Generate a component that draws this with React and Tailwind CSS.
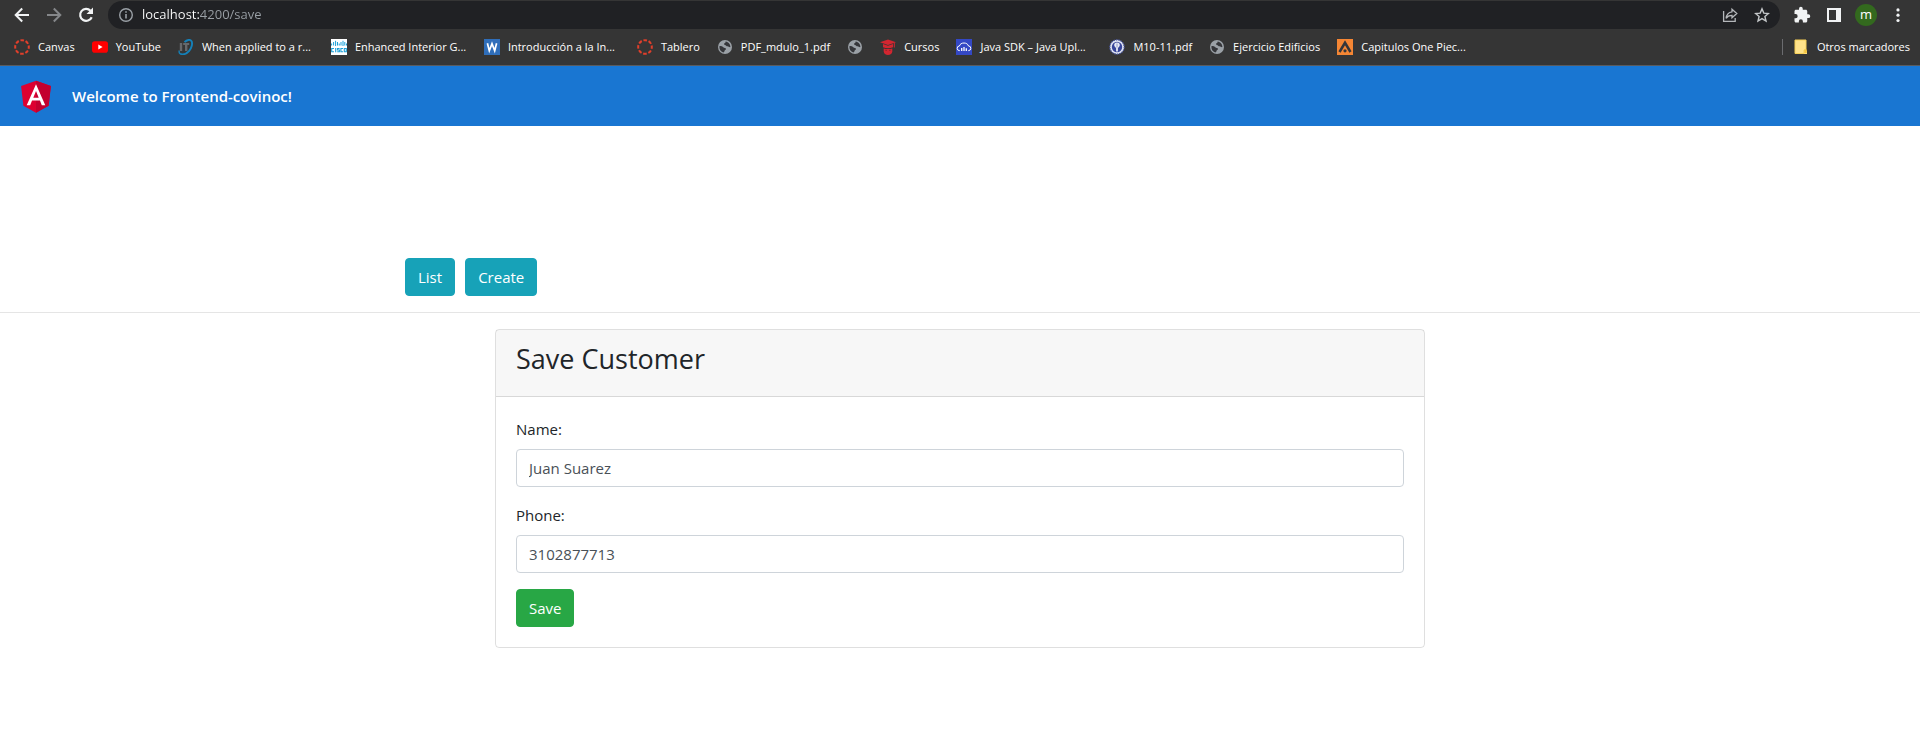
import { useState } from "react";

function CanvasIcon() {
  return (
    <svg viewBox="0 0 16 16" className="size-4" aria-hidden="true">
      <circle cx="8" cy="8" r="6.8" fill="none" stroke="#e13f2b" strokeWidth="2" strokeDasharray="3.6 1.74" strokeDashoffset="1.8" />
    </svg>
  );
}

function YouTubeIcon() {
  return (
    <svg viewBox="0 0 16 16" className="size-4" aria-hidden="true">
      <rect x="0" y="2.3" width="16" height="11.4" rx="2.8" fill="#f00" />
      <path d="M6.3 5.6v4.8L10.6 8z" fill="#fff" />
    </svg>
  );
}

function ItIcon() {
  return (
    <svg viewBox="0 0 16 16" className="size-4" aria-hidden="true">
      <path d="M6.5 3.2C9 .6 12 .2 13.400 2c1.500 2.200.3 7-2.400 10.200-2 2.300-4.600 3.600-8.200 3" fill="none" stroke="#1480b8" strokeWidth="1.900" />
      <path d="M1.300 11.500c-.6 1.800.1 3.300 1.900 3.700" fill="none" stroke="#1480b8" strokeWidth="1.400" />
      <path d="M1.800 4h2.400v8H1.800zM5.200 4h6v2H9.400v6H7V6H5.200z" fill="#66696c" />
    </svg>
  );
}

function CiscoIcon() {
  return (
    <svg viewBox="0 0 16 16" className="size-4" aria-hidden="true">
      <rect width="16" height="16" fill="#fff" />
      <path d="M.6 4.500v2M2.600 3v3.500M4.600 1.800v5.200M6.500 3v3.500M8.200 4.500v2M10 3v3.500M12 1.800v5.200M13.800 3v3.500M15.500 4.500v2" stroke="#1ba0d7" strokeWidth="1" />
      <path d="M3 9.500H.7v3.300H3M4.700 9v4.300M8.600 9.500H6.500v1.500h1.900v1.800H6.200M12 9.500h-2.100v3.300H12M13.300 9.500h2v3.300h-2z" fill="none" stroke="#1ba0d7" strokeWidth="1.100" />
    </svg>
  );
}

function WordIcon() {
  return (
    <svg viewBox="0 0 16 16" className="size-4" aria-hidden="true">
      <rect width="16" height="16" fill="#2f6eba" />
      <path d="M3.400 4.300l1.900 7.400 2.700-7 2.700 7 1.900-7.400" fill="none" stroke="#fff" strokeWidth="1.700" />
    </svg>
  );
}

function GlobeIcon() {
  return (
    <svg viewBox="0 0 16 16" className="size-4" aria-hidden="true">
      <circle cx="8" cy="8" r="7" fill="#9aa0a6" />
      <path d="M2.400 7.200c1.500-.3 3 .1 3.900 1 .8.900 2.400.3 2.700 1.500.3 1.200-1.300 1-1.500 2.200-.1.700-.6 1.300-1.300 1.500C3.700 12.600 2.100 10.200 2.400 7.200zM8.600 2.400c-.2 1-.1 1.500-1 1.900-.9.300-.7 1.400.2 1.600 1.300.2 1.500 1.300 2.700 1.400 1.200.1 1.500 1 2.900.8C13.500 5.300 11.600 2.800 8.600 2.400z" fill="#35363a" />
    </svg>
  );
}

function GraduateIcon() {
  return (
    <svg viewBox="0 0 16 16" className="size-4" aria-hidden="true">
      <path d="M0 3.200L8 .4l8 2.800L8 6z" fill="#d22630" />
      <path d="M3 5l5 1.700L13 5v3.300c-3 1.200-7 1.200-10 0z" fill="#d22630" />
      <path d="M14.300 3.500v5" stroke="#d22630" strokeWidth="1" />
      <path d="M3.700 9.400c2.700.9 5.900.9 8.600 0v3.100C12.200 14.600 10.400 16 8 16s-4.200-1.400-4.300-3.500z" fill="#d22630" />
      <path d="M5.500 11.300h1.300M9.200 11.300h1.300" stroke="#7d2329" strokeWidth="1" />
    </svg>
  );
}

function JavaCloudIcon() {
  return (
    <svg viewBox="0 0 16 16" className="size-4" aria-hidden="true">
      <rect width="16" height="16" fill="#3448c5" />
      <path d="M4 11.600H3.600A2.300 2.300 0 0 1 3.400 7C4 4.900 5.800 4 8 4s3.900 1 4.500 3a2.300 2.300 0 0 1 0 4.600h-.4" fill="none" stroke="#fff" strokeWidth="1" />
      <path d="M5.700 9v3M8 8v4M10.300 9.300v2.700" stroke="#fff" strokeWidth="1.300" />
    </svg>
  );
}

function SealIcon() {
  return (
    <svg viewBox="0 0 16 16" className="size-4" aria-hidden="true">
      <circle cx="8" cy="8" r="7.200" fill="#dfe3f2" stroke="#47549c" strokeWidth="1.200" strokeDasharray="1.500 1" />
      <circle cx="8" cy="8" r="5.200" fill="#38459a" />
      <path d="M8 3.400c1.900 0 2.800 1.100 2.800 2.500S9.600 8.300 8.900 9v3.400H7.100V9c-.7-.7-1.900-1.700-1.900-3.100S6.100 3.400 8 3.400z" fill="#e7eaf6" />
      <path d="M8 4.500v4" stroke="#7882bd" strokeWidth=".8" />
    </svg>
  );
}

function OrangeIcon() {
  return (
    <svg viewBox="0 0 16 16" className="size-4" aria-hidden="true">
      <rect width="16" height="16" fill="#f58634" />
      <path d="M2.500 13L8 3.800 13.500 13" fill="none" stroke="#35363a" strokeWidth="2.500" />
      <circle cx="8" cy="11.800" r="1.600" fill="#35363a" />
    </svg>
  );
}

function FolderIcon() {
  return (
    <svg viewBox="0 0 16 16" className="size-4" aria-hidden="true">
      <path d="M2 1h11v10.500h1V15H2z" fill="#ffe28a" />
      <path d="M2 1h11v10H11v3.500H2z" fill="none" stroke="#f6cf56" strokeWidth="1" />
      <path d="M11.300 10.500h2.500v3.700h-2.500z" fill="#f3c33c" />
    </svg>
  );
}

const bookmarks = [
  { label: "Canvas", Icon: CanvasIcon },
  { label: "YouTube", Icon: YouTubeIcon },
  { label: "When applied to a r...", Icon: ItIcon },
  { label: "Enhanced Interior G...", Icon: CiscoIcon },
  { label: "Introducción a la In...", Icon: WordIcon },
  { label: "Tablero", Icon: CanvasIcon },
  { label: "PDF_mdulo_1.pdf", Icon: GlobeIcon },
  { label: "", Icon: GlobeIcon },
  { label: "Cursos", Icon: GraduateIcon },
  { label: "Java SDK – Java Upl...", Icon: JavaCloudIcon },
  { label: "M10-11.pdf", Icon: SealIcon },
  { label: "Ejercicio Edificios", Icon: GlobeIcon },
  { label: "Capitulos One Piec...", Icon: OrangeIcon },
];

const actionButton = "flex size-[22px] items-center justify-center";

function NavigationBar() {
  const [url, setUrl] = useState("localhost:4200/save");
  return (
    <div className="flex h-[30px] items-center pl-3 pr-[11px]">
      <div className="flex items-center gap-3">
        <button type="button" aria-label="Back" className="size-5">
          <svg viewBox="0 0 20 20" className="size-5" fill="none" stroke="#f1f3f4" strokeWidth="2">
            <path d="M17 10H4M10.200 3.500L3.700 10l6.500 6.500" />
          </svg>
        </button>
        <button type="button" aria-label="Forward" className="size-5">
          <svg viewBox="0 0 20 20" className="size-5" fill="none" stroke="#85878a" strokeWidth="2">
            <path d="M3 10h13M9.800 3.500l6.500 6.500-6.500 6.500" />
          </svg>
        </button>
        <button type="button" aria-label="Reload" className="size-5">
          <svg viewBox="0 0 20 20" className="size-5" fill="none">
            <path d="M15.700 12.200a6 6 0 1 1-1.200-6.500" stroke="#f1f3f4" strokeWidth="2.200" />
            <path d="M17 2.500v6.500h-6.500z" fill="#f1f3f4" />
          </svg>
        </button>
      </div>
      <div className="ml-3 flex h-7 grow items-center rounded-full bg-[#202124] px-[10px]">
        <svg viewBox="0 0 16 16" className="size-4" fill="none" stroke="#9aa0a6" strokeWidth="1.400" aria-hidden="true">
          <circle cx="8" cy="8" r="6.300" />
          <path d="M8 7v4.500M8 4.300v1.500" strokeWidth="1.600" />
        </svg>
        <input
          aria-label="Address"
          value={url}
          onChange={(e) => setUrl(e.target.value)}
          className="ml-2 grow bg-[linear-gradient(90deg,#ffffff_58px,#9aa0a6_58px)] bg-clip-text text-[13px] text-transparent caret-white outline-none"
        />
        <div className="flex items-center gap-4">
          <button type="button" aria-label="Share">
            <svg viewBox="0 0 16 16" className="size-4" fill="none" stroke="#b4b7ba" strokeWidth="1.300">
              <path d="M1.600 4v10.400h11.600V11" />
              <path d="M10 2.200l4.800 4.300L10 10.800V8.400c-2.800 0-4.700.9-5.900 2.900.4-3.400 2.300-6 5.900-6.500z" />
            </svg>
          </button>
          <button type="button" aria-label="Bookmark this tab">
            <svg viewBox="0 0 16 16" className="size-4" fill="none" stroke="#c4c7c9" strokeWidth="1.400">
              <path d="M8 1.900l1.800 4.200 4.600.4-3.500 3 1.100 4.500L8 11.600 4 14l1.100-4.500-3.500-3 4.600-.4z" />
            </svg>
          </button>
        </div>
      </div>
      <div className="ml-[11px] flex items-center gap-[10px]">
        <button type="button" aria-label="Extensions" className={actionButton}>
          <svg viewBox="0 0 24 24" className="size-[18px]" fill="#f1f3f4">
            <path d="M20.500 11H19V7c0-1.100-.9-2-2-2h-4V3.500a2.500 2.500 0 0 0-5 0V5H4c-1.100 0-2 .9-2 2v3.800h1.500a2.700 2.700 0 0 1 0 5.400H2V20c0 1.100.9 2 2 2h3.800v-1.500a2.700 2.700 0 0 1 5.400 0V22H17c1.100 0 2-.9 2-2v-4h1.500a2.500 2.500 0 0 0 0-5z" />
          </svg>
        </button>
        <button type="button" aria-label="Side panel" className={actionButton}>
          <svg viewBox="0 0 20 20" className="size-5">
            <path d="M3 3h14v14H3zM5 5v10h7V5z" fill="#f1f3f4" fillRule="evenodd" />
          </svg>
        </button>
        <button type="button" aria-label="Profile" className={`${actionButton} rounded-full bg-[#33691e] pb-[2px] text-[13px] leading-4 text-white`}>
          m
        </button>
        <button type="button" aria-label="Menu" className={actionButton}>
          <svg viewBox="0 0 20 20" className="size-5" fill="#f1f3f4">
            <circle cx="10" cy="4.900" r="1.600" />
            <circle cx="10" cy="10.200" r="1.600" />
            <circle cx="10" cy="15.500" r="1.600" />
          </svg>
        </button>
      </div>
    </div>
  );
}

function BookmarksBar() {
  return (
    <nav aria-label="Bookmarks" className="flex h-[35px] items-center pb-px pl-[14px] pr-[10px] text-[11px] text-white">
      <ul className="flex grow items-center gap-[17px]">
        {bookmarks.map(({ label, Icon }, i) => (
          <li key={i}>
            <a href="#" aria-label={label || "Bookmark"} className="flex items-center gap-2 whitespace-nowrap">
              <Icon />
              {label && <span className={label.endsWith("...") ? "w-28" : ""}>{label}</span>}
            </a>
          </li>
        ))}
      </ul>
      <div className="flex items-center border-l border-[#6b6c6f] pl-[10px]">
        <a href="#" className="flex items-center gap-2 whitespace-nowrap">
          <FolderIcon />
          <span>Otros marcadores</span>
        </a>
      </div>
    </nav>
  );
}

function AppToolbar() {
  return (
    <header className="flex h-[60px] items-center bg-[#1976d2] text-white">
      <svg viewBox="0 0 250 250" className="mx-4 size-10" aria-label="Angular Logo" role="img">
        <path d="M125 30L31.900 63.200l14.200 123.100L125 230l78.900-43.700 14.200-123.100z" fill="#dd0031" />
        <path d="M125 30v200l78.900-43.700 14.200-123.100z" fill="#c3002f" />
        <path d="M125 52.100L66.800 182.600h21.700l11.700-29.200h49.400l11.700 29.200H183zm17 83.300h-34l17-40.900z" fill="#fff" />
      </svg>
      <span className="text-[15px] font-semibold">Welcome to Frontend-covinoc!</span>
    </header>
  );
}

const buttonBase = "h-[38px] rounded border px-3 text-[15px] leading-6 text-white";

function Field({ id, label, value, onChange }) {
  return (
    <div className="mb-4">
      <label htmlFor={id} className="mb-2 block leading-6">
        {label}
      </label>
      <input
        id={id}
        value={value}
        onChange={(e) => onChange(e.target.value)}
        className="block h-[38px] w-full rounded border border-[#ced4da] bg-white px-3 leading-6 text-[#495057]"
      />
    </div>
  );
}

export default function App() {
  const [name, setName] = useState("Juan Suarez");
  const [phone, setPhone] = useState("3102877713");
  return (
    <div className="min-h-screen bg-white font-['Open_Sans','Noto_Sans',sans-serif] text-[15px] text-[#212529]">
      <div className="border-b border-[#5a5b5e] bg-[#353535]">
        <NavigationBar />
        <BookmarksBar />
      </div>
      <AppToolbar />
      <main className="pt-[132px]">
        <div className="mx-auto flex max-w-[1110px] gap-[10px]">
          <button type="button" className={`${buttonBase} border-[#17a2b8] bg-[#17a2b8]`}>
            List
          </button>
          <button type="button" className={`${buttonBase} border-[#17a2b8] bg-[#17a2b8]`}>
            Create
          </button>
        </div>
        <hr className="my-4 border-black/10" />
        <section className="mx-auto max-w-[930px] rounded border border-black/[0.125]">
          <div className="border-b border-black/[0.125] bg-black/[0.03] px-5 py-3">
            <h2 className="mb-2 text-[27px] font-medium leading-[34px]">Save Customer</h2>
          </div>
          <form className="p-5" onSubmit={(e) => e.preventDefault()}>
            <Field id="name" label="Name:" value={name} onChange={setName} />
            <Field id="phone" label="Phone:" value={phone} onChange={setPhone} />
            <button type="submit" className={`${buttonBase} block border-[#28a745] bg-[#28a745]`}>
              Save
            </button>
          </form>
        </section>
      </main>
    </div>
  );
}
